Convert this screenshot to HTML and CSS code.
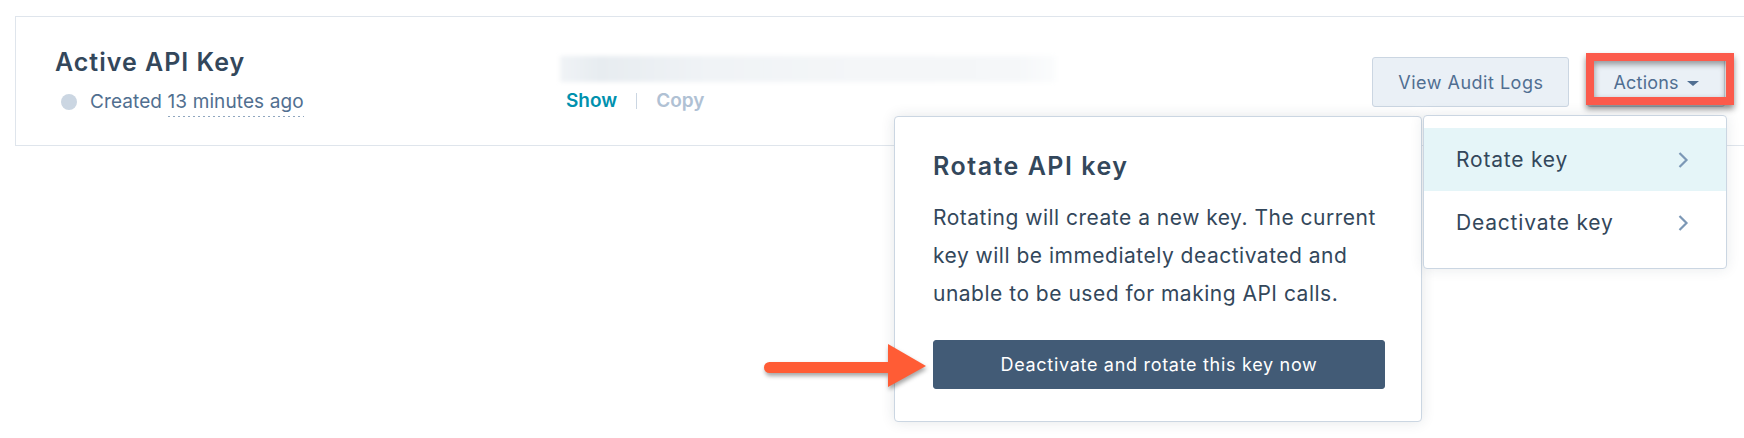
FILE: index.html
```html
<!DOCTYPE html>
<html lang="en">
<head>
    <meta charset="UTF-8">
    <meta name="viewport" content="width=device-width, initial-scale=1.0">
    <title>API Key</title>
    <link rel="stylesheet" href="styles.css">
</head>
<body>
    <div class="page">
        <section class="key-card">
            <div class="key-info">
                <h1 class="key-title">Active API Key</h1>
                <p class="key-meta">
                    <span class="status-dot"></span>
                    <span>Created <span class="timestamp">13 minutes ago</span></span>
                </p>
            </div>

            <div class="key-value">
                <div class="key-mask"></div>
                <div class="key-links">
                    <a href="#" class="link-show">Show</a>
                    <span class="link-sep"></span>
                    <span class="link-copy">Copy</span>
                </div>
            </div>

            <div class="key-actions">
                <button class="btn">View Audit Logs</button>
                <button class="btn btn-actions">Actions <span class="caret"></span></button>
            </div>
        </section>

        <!-- Rotate popover -->
        <div class="popover">
            <h2 class="popover-title">Rotate API key</h2>
            <p class="popover-text">Rotating will create a new key. The current key will be immediately deactivated and unable to be used for making API calls.</p>
            <button class="btn-primary">Deactivate and rotate this key now</button>
        </div>

        <!-- Actions dropdown -->
        <ul class="dropdown">
            <li class="active">
                <span>Rotate key</span>
                <svg class="chevron" viewBox="0 0 12 18"><path d="M2.5 2 L9.5 9 L2.5 16"/></svg>
            </li>
            <li>
                <span>Deactivate key</span>
                <svg class="chevron" viewBox="0 0 12 18"><path d="M2.5 2 L9.5 9 L2.5 16"/></svg>
            </li>
        </ul>

        <!-- Annotations -->
        <div class="highlight-box"></div>
        <svg class="callout-arrow" viewBox="0 0 176 56">
            <rect x="6" y="24" width="130" height="11" rx="5.5"/>
            <polygon points="130,6 168,28 130,49"/>
        </svg>
    </div>
</body>
</html>
```

FILE: styles.css
```css
* {
    margin: 0;
    padding: 0;
    box-sizing: border-box;
}

body {
    font-family: Inter, "Noto Sans", sans-serif;
    color: #33475b;
    background: #fff;
    overflow: hidden;
}

.page {
    position: relative;
    height: 438px;
    padding: 16px 0 0 15px;
}

/* Key card */
.key-card {
    display: flex;
    align-items: flex-start;
    width: 1745px;
    height: 130px;
    border: 1px solid #dfe5ec;
    padding: 0 34px 0 39px;
}

.key-info {
    width: 505px;
    padding-top: 30px;
}

.key-title {
    font-size: 25px;
    line-height: 30px;
    font-weight: 600;
    letter-spacing: 1px;
    color: #33475b;
}

.key-meta {
    display: flex;
    align-items: center;
    margin-top: 13px;
    font-size: 19px;
    line-height: 24px;
    letter-spacing: 0.1px;
    color: #516f90;
}

.status-dot {
    width: 16px;
    height: 16px;
    border-radius: 50%;
    background: #cbd6e2;
    margin: 0 13px 0 6px;
}

.timestamp {
    padding-bottom: 4px;
    background-image: linear-gradient(to right, #8fa6bf 2px, transparent 2px);
    background-size: 5px 1px;
    background-repeat: repeat-x;
    background-position: 0 100%;
}

.key-value {
    width: 496px;
    margin-top: 39px;
}

.key-mask {
    height: 26px;
    background: linear-gradient(90deg, #f0f3f6 0%, #e7ecf0 8%, #f0f3f6 30%, #f4f6f8 60%, #f5f7f9 92%, #fbfcfd 100%);
    filter: blur(2px);
}

.key-links {
    display: flex;
    align-items: center;
    margin-top: 7px;
    padding-left: 6px;
    font-size: 19px;
    line-height: 24px;
    font-weight: 600;
}

.link-show {
    color: #0091ae;
    text-decoration: none;
}

.link-sep {
    width: 1px;
    height: 16px;
    background: #cbd6e2;
    margin: 0 19px;
}

.link-copy {
    color: #b0c1d4;
}

.key-actions {
    display: flex;
    gap: 18px;
    margin-left: auto;
    margin-top: 40px;
}

.btn {
    height: 50px;
    padding: 0 25px;
    border: 1px solid #cbd6e2;
    border-radius: 3px;
    background: #eaf0f6;
    color: #506e91;
    font-family: inherit;
    font-size: 18px;
    letter-spacing: 0.5px;
}

.btn-actions {
    letter-spacing: 0.2px;
}

.caret {
    display: inline-block;
    border-left: 6px solid transparent;
    border-right: 6px solid transparent;
    border-top: 5px solid #506e91;
    margin-left: 3px;
    vertical-align: middle;
}

/* Popover */
.popover {
    position: absolute;
    left: 894px;
    top: 116px;
    width: 528px;
    height: 306px;
    background: #fff;
    border: 1px solid #cbd6e2;
    border-radius: 4px;
    box-shadow: 0 0 14px rgba(33, 51, 67, 0.12);
    padding: 34px 36px 0 38px;
}

.popover-title {
    font-size: 25px;
    line-height: 30px;
    font-weight: 600;
    letter-spacing: 1.5px;
}

.popover-text {
    margin-top: 18px;
    font-size: 21px;
    line-height: 38px;
    letter-spacing: 0.5px;
}

.btn-primary {
    display: block;
    width: 100%;
    height: 49px;
    margin-top: 27px;
    background: #425b76;
    border: 1px solid #425b76;
    border-radius: 3px;
    color: #fff;
    font-family: inherit;
    font-size: 18px;
    letter-spacing: 0.7px;
}

/* Dropdown */
.dropdown {
    position: absolute;
    left: 1423px;
    top: 115px;
    width: 304px;
    height: 154px;
    list-style: none;
    background: #fff;
    border: 1px solid #cbd6e2;
    border-radius: 4px;
    box-shadow: 0 0 14px rgba(33, 51, 67, 0.1);
    padding-top: 12px;
}

.dropdown li {
    display: flex;
    align-items: center;
    justify-content: space-between;
    height: 63px;
    padding: 0 37px 0 32px;
    font-size: 21px;
    letter-spacing: 0.8px;
    color: #33475b;
}

.dropdown li.active {
    background: #e5f5f8;
}

.chevron {
    width: 12px;
    height: 18px;
    fill: none;
    stroke: #7c98b6;
    stroke-width: 2.2;
}

/* Annotations */
.highlight-box {
    position: absolute;
    left: 1586px;
    top: 53px;
    width: 148px;
    height: 52px;
    border: 8px solid #fb5a4b;
    box-shadow: 0 4px 6px rgba(0, 0, 0, 0.45), inset 0 3px 6px rgba(0, 0, 0, 0.4);
}

.callout-arrow {
    position: absolute;
    left: 758px;
    top: 338px;
    width: 176px;
    height: 56px;
    fill: #ff5c35;
    filter: drop-shadow(1px 3px 2px rgba(0, 0, 0, 0.35));
}
```
